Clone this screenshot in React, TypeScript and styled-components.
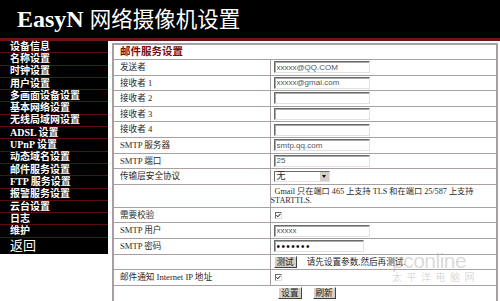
import React from 'react'
import styled, { createGlobalStyle, css } from 'styled-components'

const GlobalStyle = createGlobalStyle`
  html, body {
    margin: 0;
    padding: 0;
    background: #fff;
  }
  body {
    width: 500px;
    height: 301px;
    overflow: hidden;
    font-family: "Liberation Serif", "Noto Sans CJK SC", serif;
  }
`

const Page = styled.div`
  position: relative;
  width: 500px;
  height: 301px;
  overflow: hidden;
`

const Header = styled.header`
  display: flex;
  align-items: center;
  height: 38px;
  padding-left: 17px;
  background: #000;
  border-bottom: 3px solid #6e1414;
`

const Title = styled.h1`
  margin: 0;
  color: #fff;
  font-family: "Liberation Serif", serif;
  font-size: 24px;
  font-weight: bold;
  line-height: 1;
  white-space: nowrap;
`

const TitleCjk = styled.span`
  margin-left: 6px;
  font-family: "Noto Sans CJK SC", sans-serif;
  font-size: 21.5px;
  font-weight: 400;
`

const Body = styled.div`
  display: flex;
  align-items: flex-start;
`

const Sidebar = styled.nav`
  display: flex;
  flex-direction: column;
  width: 108px;
  flex-shrink: 0;
  background: #000;
`

const MenuItem = styled.a<{ $big?: boolean }>`
  display: flex;
  align-items: center;
  box-sizing: border-box;
  height: 12.3px;
  padding-left: 10px;
  border-bottom: 1px solid #5a0e0e;
  color: #fff;
  font-family: "Liberation Serif", "Noto Sans CJK SC", serif;
  font-size: 10px;
  font-weight: bold;
  line-height: 1;
  white-space: nowrap;
  text-decoration: none;

  ${props => props.$big && css`
    height: 16px;
    font-size: 13px;
    font-weight: normal;
    border-bottom: none;
  `}
`

const Main = styled.main`
  flex: 1;
  padding: 2px 2px 0 4px;
`

const Table = styled.table`
  width: 386px;
  table-layout: fixed;
  border-collapse: collapse;
  border: 2px solid #a8a0a0;
  color: #2a2a2a;
  font-family: "Liberation Serif", "Noto Sans CJK SC", serif;
  font-size: 8.6px;
`

const LabelCol = styled.col`
  width: 157px;
`

const Cell = styled.td<{ $h?: number }>`
  height: ${props => props.$h ?? 14.6}px;
  padding: 0;
  border: 1px solid #a8a0a0;
  vertical-align: middle;
  line-height: 1;
  white-space: nowrap;
  overflow: hidden;
`

const HeadCell = styled(Cell)`
  padding-left: 6px;
  color: #7a1010;
  font-size: 10.5px;
  font-weight: bold;
`

const LabelCell = styled(Cell)`
  padding-left: 6px;
`

const ValueCell = styled(Cell)`
  padding-left: 3px;
`

const NoteCell = styled(Cell)`
  font-size: 8.2px;
  line-height: 9px;
`

const NoteLine = styled.div<{ $indent?: number }>`
  padding-left: ${props => props.$indent ?? 0}px;
  white-space: nowrap;
`

const ActionCell = styled(Cell)`
  text-align: center;
`

const InlineRow = styled.div`
  display: flex;
  align-items: center;
  gap: 10px;
`

const ButtonRow = styled.div`
  display: flex;
  justify-content: center;
  gap: 11px;
  padding-left: 4px;
`

const TextInput = styled.input<{ $w?: number }>`
  display: block;
  box-sizing: border-box;
  width: ${props => props.$w ?? 96}px;
  height: 12px;
  margin: 0;
  padding: 0 2px;
  border: 1px solid;
  border-color: #6a6a6a #e2e2e2 #e2e2e2 #6a6a6a;
  box-shadow: inset 1px 1px 0 #a8a8a8;
  background: #fff;
  color: #555;
  font-family: "Liberation Sans", Arial, sans-serif;
  font-size: 8px;
  outline: none;
`

const PasswordInput = styled(TextInput)`
  color: #111;
  font-size: 10px;
  letter-spacing: 1.4px;
`

const Select = styled.div`
  display: flex;
  box-sizing: border-box;
  width: 56px;
  height: 11px;
  border: 1px solid;
  border-color: #6a6a6a #e2e2e2 #e2e2e2 #6a6a6a;
  background: #fff;
  font-size: 9px;
`

const SelectValue = styled.span`
  flex: 1;
  padding-left: 2px;
  line-height: 9px;
`

const SelectArrow = styled.span`
  display: flex;
  align-items: center;
  justify-content: center;
  width: 9px;
  background: #d4d0c8;
  border-left: 1px solid #fff;

  &::after {
    content: "";
    border-left: 2.5px solid transparent;
    border-right: 2.5px solid transparent;
    border-top: 3px solid #111;
  }
`

const CheckBox = styled.span`
  display: block;
  box-sizing: border-box;
  width: 7px;
  height: 7px;
  margin-left: 1px;
  border: 1px solid;
  border-color: #6a6a6a #dcdcdc #dcdcdc #6a6a6a;
  background: #fff;

  svg {
    display: block;
  }
`

const Button = styled.button`
  box-sizing: border-box;
  height: 12px;
  margin: 0;
  padding: 0 2px;
  border: 1px solid;
  border-color: #fff #404040 #404040 #fff;
  background: #d4d0c8;
  color: #222;
  font-family: "Liberation Serif", "Noto Sans CJK SC", serif;
  font-size: 8.6px;
  line-height: 1;
`

const Hint = styled.span`
  font-size: 8.6px;
`

const Watermark = styled.div`
  position: absolute;
  left: 392px;
  top: 238px;
  display: flex;
  flex-direction: column;
  align-items: flex-start;
  color: rgba(170, 170, 170, 0.45);
  pointer-events: none;
`

const WatermarkBrand = styled.span`
  font-family: "Liberation Sans", Arial, sans-serif;
  font-size: 21px;
  line-height: 1;
  letter-spacing: -0.5px;
  padding-top: 12px;
`

const WatermarkCjk = styled.span`
  font-family: "Noto Sans CJK SC", sans-serif;
  font-size: 10px;
  letter-spacing: 4.5px;
  line-height: 1.2;
`

const menu = [
  '设备信息', '名称设置', '时钟设置', '用户设置', '多画面设备设置', '基本网络设置',
  '无线局域网设置', 'ADSL 设置', 'UPnP 设置', '动态域名设置', '邮件服务设置',
  'FTP 服务设置', '报警服务设置', '云台设置', '日志', '维护'
]

function Check() {
  return (
    <CheckBox>
      <svg width="5" height="5" viewBox="0 0 5 5">
        <polyline points="0.5,2.2 1.8,3.8 4.5,0.8" fill="none" stroke="#111" strokeWidth="1" />
      </svg>
    </CheckBox>
  )
}

export default function App() {
  return (
    <Page>
      <GlobalStyle />
      <Header>
        <Title>EasyN<TitleCjk>网络摄像机设置</TitleCjk></Title>
      </Header>
      <Body>
        <Sidebar>
          {menu.map(item => <MenuItem key={item}>{item}</MenuItem>)}
          <MenuItem $big>返回</MenuItem>
        </Sidebar>
        <Main>
          <Table>
            <colgroup>
              <LabelCol />
              <col />
            </colgroup>
            <tbody>
              <tr><HeadCell colSpan={2} $h={14}>邮件服务设置</HeadCell></tr>
              <tr>
                <LabelCell>发送者</LabelCell>
                <ValueCell><TextInput readOnly defaultValue="xxxxx@QQ.COM" /></ValueCell>
              </tr>
              <tr>
                <LabelCell>接收者 1</LabelCell>
                <ValueCell><TextInput readOnly defaultValue="xxxxx@gmai.com" /></ValueCell>
              </tr>
              <tr>
                <LabelCell>接收者 2</LabelCell>
                <ValueCell><TextInput readOnly /></ValueCell>
              </tr>
              <tr>
                <LabelCell>接收者 3</LabelCell>
                <ValueCell><TextInput readOnly /></ValueCell>
              </tr>
              <tr>
                <LabelCell>接收者 4</LabelCell>
                <ValueCell><TextInput readOnly /></ValueCell>
              </tr>
              <tr>
                <LabelCell>SMTP 服务器</LabelCell>
                <ValueCell><TextInput readOnly defaultValue="smtp.qq.com" /></ValueCell>
              </tr>
              <tr>
                <LabelCell>SMTP 端口</LabelCell>
                <ValueCell><TextInput readOnly defaultValue="25" /></ValueCell>
              </tr>
              <tr>
                <LabelCell>传输层安全协议</LabelCell>
                <ValueCell>
                  <Select><SelectValue>无</SelectValue><SelectArrow /></Select>
                </ValueCell>
              </tr>
              <tr>
                <LabelCell $h={22}></LabelCell>
                <NoteCell $h={22}>
                  <NoteLine $indent={4}>Gmail 只在端口 465 上支持 TLS 和在端口 25/587 上支持</NoteLine>
                  <NoteLine>STARTTLS.</NoteLine>
                </NoteCell>
              </tr>
              <tr>
                <LabelCell>需要校验</LabelCell>
                <ValueCell><Check /></ValueCell>
              </tr>
              <tr>
                <LabelCell>SMTP 用户</LabelCell>
                <ValueCell><TextInput readOnly defaultValue="xxxxx" /></ValueCell>
              </tr>
              <tr>
                <LabelCell>SMTP 密码</LabelCell>
                <ValueCell><PasswordInput type="password" readOnly defaultValue="xxxxxxx" $w={90} /></ValueCell>
              </tr>
              <tr>
                <LabelCell></LabelCell>
                <ValueCell>
                  <InlineRow>
                    <Button>测试</Button>
                    <Hint>请先设置参数,然后再测试.</Hint>
                  </InlineRow>
                </ValueCell>
              </tr>
              <tr>
                <LabelCell>邮件通知 Internet IP 地址</LabelCell>
                <ValueCell><Check /></ValueCell>
              </tr>
              <tr>
                <ActionCell colSpan={2} $h={15.5}>
                  <ButtonRow>
                    <Button>设置</Button>
                    <Button>刷新</Button>
                  </ButtonRow>
                </ActionCell>
              </tr>
            </tbody>
          </Table>
        </Main>
      </Body>
      <Watermark>
        <WatermarkBrand>pconline</WatermarkBrand>
        <WatermarkCjk>太平洋电脑网</WatermarkCjk>
      </Watermark>
    </Page>
  )
}
